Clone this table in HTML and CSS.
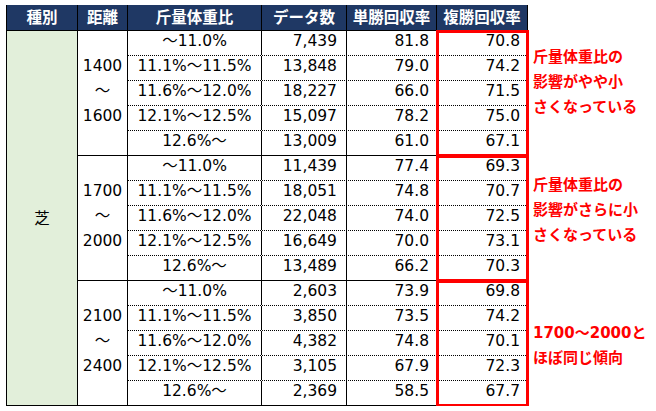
FILE: index.html
```html
<!DOCTYPE html>
<html lang="ja">
<head>
<meta charset="utf-8">
<title>斤量体重比と回収率</title>
<link rel="stylesheet" href="styles.css">
</head>
<body>
<div class="page">
  <div class="table">
    <div class="head">
      <div class="h w1">種別</div>
      <div class="h w2">距離</div>
      <div class="h w3">斤量体重比</div>
      <div class="h w4">データ数</div>
      <div class="h w5">単勝回収率</div>
      <div class="h w6">複勝回収率</div>
    </div>
    <div class="body">
      <div class="kind">芝</div>
      <div class="groups">
        <div class="group">
          <div class="dist"><span>1400</span><span>～</span><span>1600</span></div>
          <div class="rows">
            <div class="row"><div class="c3">～11.0%</div><div class="c4">7,439</div><div class="c5">81.8</div></div>
            <div class="row"><div class="c3">11.1%～11.5%</div><div class="c4">13,848</div><div class="c5">79.0</div></div>
            <div class="row"><div class="c3">11.6%～12.0%</div><div class="c4">18,227</div><div class="c5">66.0</div></div>
            <div class="row"><div class="c3">12.1%～12.5%</div><div class="c4">15,097</div><div class="c5">78.2</div></div>
            <div class="row"><div class="c3">12.6%～</div><div class="c4">13,009</div><div class="c5">61.0</div></div>
          </div>
          <div class="place">
            <div class="c6">70.8</div>
            <div class="c6">74.2</div>
            <div class="c6">71.5</div>
            <div class="c6">75.0</div>
            <div class="c6">67.1</div>
          </div>
        </div>
        <div class="group">
          <div class="dist"><span>1700</span><span>～</span><span>2000</span></div>
          <div class="rows">
            <div class="row"><div class="c3">～11.0%</div><div class="c4">11,439</div><div class="c5">77.4</div></div>
            <div class="row"><div class="c3">11.1%～11.5%</div><div class="c4">18,051</div><div class="c5">74.8</div></div>
            <div class="row"><div class="c3">11.6%～12.0%</div><div class="c4">22,048</div><div class="c5">74.0</div></div>
            <div class="row"><div class="c3">12.1%～12.5%</div><div class="c4">16,649</div><div class="c5">70.0</div></div>
            <div class="row"><div class="c3">12.6%～</div><div class="c4">13,489</div><div class="c5">66.2</div></div>
          </div>
          <div class="place">
            <div class="c6">69.3</div>
            <div class="c6">70.7</div>
            <div class="c6">72.5</div>
            <div class="c6">73.1</div>
            <div class="c6">70.3</div>
          </div>
        </div>
        <div class="group">
          <div class="dist"><span>2100</span><span>～</span><span>2400</span></div>
          <div class="rows">
            <div class="row"><div class="c3">～11.0%</div><div class="c4">2,603</div><div class="c5">73.9</div></div>
            <div class="row"><div class="c3">11.1%～11.5%</div><div class="c4">3,850</div><div class="c5">73.5</div></div>
            <div class="row"><div class="c3">11.6%～12.0%</div><div class="c4">4,382</div><div class="c5">74.8</div></div>
            <div class="row"><div class="c3">12.1%～12.5%</div><div class="c4">3,105</div><div class="c5">67.9</div></div>
            <div class="row"><div class="c3">12.6%～</div><div class="c4">2,369</div><div class="c5">58.5</div></div>
          </div>
          <div class="place">
            <div class="c6">69.8</div>
            <div class="c6">74.2</div>
            <div class="c6">70.1</div>
            <div class="c6">72.3</div>
            <div class="c6">67.7</div>
          </div>
        </div>
      </div>
    </div>
  </div>
  <div class="notes">
    <div class="note note-1">斤量体重比の<br>影響がやや小<br>さくなっている</div>
    <div class="note note-2">斤量体重比の<br>影響がさらに小<br>さくなっている</div>
    <div class="note note-3">1700～2000と<br>ほぼ同じ傾向</div>
  </div>
</div>
</body>
</html>
```

FILE: styles.css
```css
* {
  box-sizing: border-box;
}

html, body {
  margin: 0;
  padding: 0;
  background: #ffffff;
}

body {
  font-family: "DejaVu Sans", "Noto Sans CJK JP", sans-serif;
  color: #000000;
}

.page {
  display: flex;
  padding: 5px 0 0 6px;
}

.table {
  display: flex;
  flex-direction: column;
  border-left: 1px solid #000000;
}

.head {
  display: flex;
  height: 26px;
}

.h {
  background: #1f3864;
  color: #ffffff;
  font-family: "Noto Sans CJK JP", sans-serif;
  font-weight: 700;
  font-size: 15.5px;
  line-height: 22px;
  padding-bottom: 3px;
  text-align: center;
  border-right: 1px solid #000000;
  border-bottom: 1px solid #000000;
  white-space: nowrap;
}

.w1 { width: 71px; }
.w2 { width: 50px; }
.w3 { width: 134px; }
.w4 { width: 85px; }
.w5 { width: 90px; }
.w6 { width: 91px; }

.body {
  display: flex;
}

.kind {
  width: 71px;
  background: #e2efda;
  border-right: 1px solid #000000;
  border-bottom: 1px solid #000000;
  display: flex;
  align-items: center;
  justify-content: center;
  font-family: "Noto Sans CJK JP", sans-serif;
  font-size: 15.5px;
  padding-bottom: 3px;
}

.groups {
  display: flex;
  flex-direction: column;
}

.group {
  display: flex;
}

.dist {
  width: 50px;
  border-right: 1px solid #000000;
  border-bottom: 1px solid #000000;
  display: flex;
  flex-direction: column;
  align-items: center;
  justify-content: center;
  font-size: 15.5px;
  line-height: 25px;
  padding-bottom: 4px;
}

.rows {
  display: flex;
  flex-direction: column;
}

.row {
  display: flex;
  height: 25px;
  border-bottom: 1px dotted #000000;
}

.row:last-child {
  border-bottom-style: solid;
}

.c3, .c4, .c5, .c6 {
  font-size: 15.5px;
  line-height: 21px;
  white-space: nowrap;
}

.c3 {
  width: 134px;
  text-align: center;
  border-right: 1px solid #000000;
}

.c4 {
  width: 85px;
  text-align: right;
  padding-right: 9px;
  border-right: 1px solid #000000;
}

.c5 {
  width: 90px;
  text-align: right;
  padding-right: 8px;
}

.place {
  width: 91px;
  display: flex;
  flex-direction: column;
  outline: 3px solid #ff0000;
  outline-offset: -2px;
}

.c6 {
  height: 25px;
  text-align: right;
  padding-right: 8px;
  border-bottom: 1px dotted #000000;
}

.c6:last-child {
  border-bottom-style: solid;
}

.notes {
  display: flex;
  flex-direction: column;
  padding-top: 26px;
}

.note {
  height: 125px;
  padding-left: 5px;
  color: #ff0000;
  font-family: "DejaVu Sans", "Noto Sans CJK JP", sans-serif;
  font-weight: 700;
  font-size: 15px;
  line-height: 25px;
  white-space: nowrap;
}

.note-1 { padding-top: 14px; }
.note-2 { padding-top: 17px; }
.note-3 { padding-top: 40px; }
```
